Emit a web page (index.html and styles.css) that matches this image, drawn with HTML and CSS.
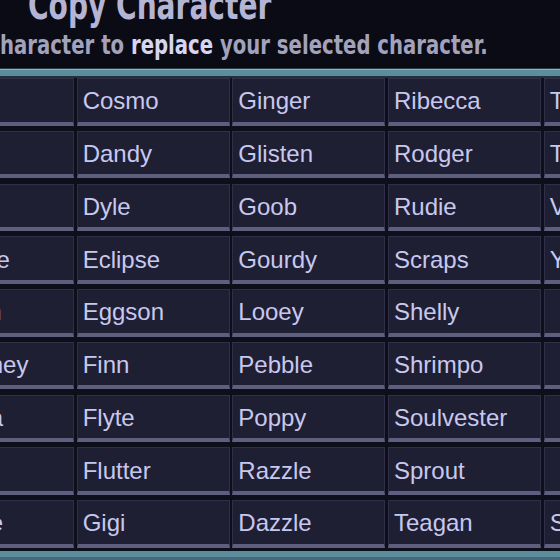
FILE: index.html
```html
<!DOCTYPE html>
<html>
<head>
<meta charset="utf-8">
<link rel="stylesheet" href="styles.css">
</head>
<body>
<div class="screen">
  <header class="header">
    <div class="title-row"><h1 class="title">Copy Character</h1></div>
    <div class="subtitle-row"><p class="subtitle">Select a character to <b>replace</b> your selected character.</p></div>
  </header>
  <div class="band band-top"></div>
  <div class="panel">
    <div class="grid">
      <div class="cell">Astro</div>
      <div class="cell">Bassie</div>
      <div class="cell">Blot</div>
      <div class="cell">Bobette</div>
      <div class="cell">Boxten</div>
      <div class="cell">Brightney</div>
      <div class="cell">Brusha</div>
      <div class="cell">Cocoa</div>
      <div class="cell">Connie</div>

      <div class="cell">Cosmo</div>
      <div class="cell">Dandy</div>
      <div class="cell">Dyle</div>
      <div class="cell">Eclipse</div>
      <div class="cell">Eggson</div>
      <div class="cell">Finn</div>
      <div class="cell">Flyte</div>
      <div class="cell">Flutter</div>
      <div class="cell">Gigi</div>

      <div class="cell">Ginger</div>
      <div class="cell">Glisten</div>
      <div class="cell">Goob</div>
      <div class="cell">Gourdy</div>
      <div class="cell">Looey</div>
      <div class="cell">Pebble</div>
      <div class="cell">Poppy</div>
      <div class="cell">Razzle</div>
      <div class="cell">Dazzle</div>

      <div class="cell">Ribecca</div>
      <div class="cell">Rodger</div>
      <div class="cell">Rudie</div>
      <div class="cell">Scraps</div>
      <div class="cell">Shelly</div>
      <div class="cell">Shrimpo</div>
      <div class="cell">Soulvester</div>
      <div class="cell">Sprout</div>
      <div class="cell">Teagan</div>

      <div class="cell">Tisha</div>
      <div class="cell">Toodles</div>
      <div class="cell">Vee</div>
      <div class="cell">Yatta</div>
      <div class="cell"></div>
      <div class="cell"></div>
      <div class="cell"></div>
      <div class="cell"></div>
      <div class="cell">Sprig</div>
    </div>
  </div>
  <div class="band band-bottom"></div>
</div>
</body>
</html>
```

FILE: styles.css
```css
html, body {
  margin: 0;
  padding: 0;
  background: #0b0b15;
}

.screen {
  width: 560px;
  height: 560px;
  overflow: hidden;
  display: flex;
  flex-direction: column;
  background: #0b0b15;
}

.header {
  height: 68px;
  flex: none;
  display: flex;
  flex-direction: column;
  overflow: hidden;
}

.title-row {
  height: 26px;
  flex: none;
  display: flex;
  align-items: flex-end;
  padding-left: 28px;
}

.title {
  margin: 0 0 1px 0;
  font-family: "DejaVu Sans Condensed", "DejaVu Sans", sans-serif;
  font-weight: 700;
  font-size: 40px;
  line-height: 40px;
  color: #b4b4d4;
  white-space: nowrap;
  transform: scaleX(0.78);
  transform-origin: left bottom;
}

.subtitle-row {
  width: 488px;
  flex: none;
  display: flex;
  justify-content: flex-end;
  margin-top: 2px;
}

.subtitle {
  margin: 0;
  flex: none;
  font-family: "DejaVu Sans Condensed", "DejaVu Sans", sans-serif;
  font-weight: 700;
  font-size: 27px;
  line-height: 34px;
  color: #a2a2bc;
  white-space: nowrap;
  transform: scaleX(0.81);
  transform-origin: right center;
}

.subtitle b {
  color: #d6d6f2;
}

.band {
  flex: none;
}

.band-top {
  height: 10px;
  background: linear-gradient(to bottom,
    #2a3c48 0, #2a3c48 1px,
    #8db3c2 1px, #8db3c2 2px,
    #5b8d9d 2px, #5b8d9d 8px,
    #22303c 8px, #22303c 10px);
}

.panel {
  flex: none;
  background: #0f0f1c;
  padding-bottom: 3px;
}

.grid {
  margin-left: -79px;
  display: grid;
  grid-auto-flow: column;
  grid-template-rows: repeat(9, 47.5px);
  grid-auto-columns: 153px;
  column-gap: 2.67px;
  row-gap: 5.25px;
}

.cell {
  box-sizing: border-box;
  background: #1f1f34;
  border: 1px solid #2f2f47;
  border-bottom: 4px solid #5e5e7e;
  padding: 2px 0 0 5px;
  display: flex;
  align-items: center;
  font-family: "Liberation Sans", Arial, sans-serif;
  font-size: 24px;
  color: #c8c8ee;
  white-space: nowrap;
  overflow: hidden;
}

.band-bottom {
  height: 12px;
  background: linear-gradient(to bottom,
    #5b8d9d 0, #5b8d9d 6px,
    #46687a 6px, #46687a 12px);
}
```
